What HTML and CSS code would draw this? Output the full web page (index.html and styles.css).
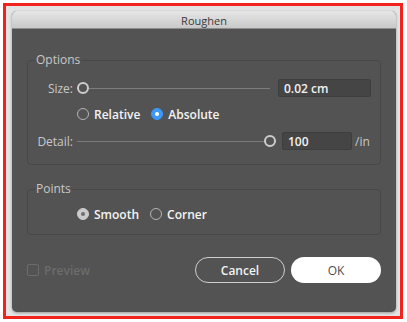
FILE: index.html
```html
<!DOCTYPE html>
<html lang="en">
<head>
    <meta charset="UTF-8">
    <meta name="viewport" content="width=device-width, initial-scale=1.0">
    <title>Roughen</title>
    <link rel="stylesheet" href="styles.css">
</head>
<body>
    <div class="frame">
        <div class="dialog">
            <div class="titlebar">Roughen</div>

            <div class="content">
                <fieldset class="group options">
                    <legend>Options</legend>

                    <div class="row">
                        <span class="label">Size:</span>
                        <div class="slider size-slider">
                            <span class="thumb thumb-start"></span>
                        </div>
                        <div class="field size-field">0.02 cm</div>
                    </div>

                    <div class="row radios indent">
                        <span class="radio"></span>
                        <span class="radio-label">Relative</span>
                        <span class="radio checked"></span>
                        <span class="radio-label">Absolute</span>
                    </div>

                    <div class="row">
                        <span class="label">Detail:</span>
                        <div class="slider detail-slider">
                            <span class="thumb thumb-end"></span>
                        </div>
                        <div class="field detail-field">100</div>
                        <span class="unit">/in</span>
                    </div>
                </fieldset>

                <fieldset class="group points">
                    <legend>Points</legend>
                    <div class="row radios indent">
                        <span class="radio selected-grey"></span>
                        <span class="radio-label">Smooth</span>
                        <span class="radio"></span>
                        <span class="radio-label">Corner</span>
                    </div>
                </fieldset>

                <div class="footer">
                    <div class="preview">
                        <span class="checkbox"></span>
                        <span>Preview</span>
                    </div>
                    <div class="buttons">
                        <button class="btn btn-cancel">Cancel</button>
                        <button class="btn btn-ok">OK</button>
                    </div>
                </div>
            </div>
        </div>
    </div>
</body>
</html>
```

FILE: styles.css
```css
body {
    margin: 0;
    padding: 3px;
    background-color: #ffffff;
    font-family: "Open Sans", "Noto Sans", sans-serif;
}
.frame {
    border: 3px solid #f2231d;
    background-color: #e4e4e4;
    padding: 5px 0 0 6px;
    width: 388px;
    height: 305px;
}
.dialog {
    width: 384px;
    height: 301px;
    background-color: #535353;
    border-radius: 5px;
    overflow: hidden;
    box-shadow: 0 1px 3px rgba(0, 0, 0, 0.35);
    display: flex;
    flex-direction: column;
}
.titlebar {
    height: 18px;
    line-height: 19px;
    text-align: center;
    font-size: 11px;
    color: #3a3a3a;
    background: linear-gradient(#e6e6e6, #c9c9c9);
    border-bottom: 1px solid #8d8d8d;
    box-sizing: border-box;
}
.content {
    padding: 24px 15px 0 15px;
    display: flex;
    flex-direction: column;
}
.group {
    margin: 0;
    border: 1px solid #484848;
    border-radius: 4px;
    padding: 0 9px;
    min-width: 0;
}
.group legend {
    margin-left: -2px;
    padding: 0 1px;
    font-size: 12px;
    line-height: 14px;
    color: #c8c8c8;
}
.options {
    padding-top: 12px;
    padding-bottom: 14px;
}
.points {
    margin-top: 17px;
    padding-top: 9px;
    padding-bottom: 11px;
}
.row {
    display: flex;
    align-items: center;
    height: 18px;
}
.options .row + .row {
    margin-top: 8px;
}
.options .row.radios + .row {
    margin-top: 9px;
}
.label {
    width: 36px;
    text-align: right;
    font-size: 12px;
    color: #c8c8c8;
    margin-right: 4px;
}
.indent {
    padding-left: 40px;
}
.slider {
    position: relative;
    height: 12px;
    display: flex;
    align-items: center;
}
.slider::before {
    content: "";
    flex: 1;
    height: 1px;
    background-color: #7c7c7c;
}
.size-slider {
    width: 193px;
    margin-right: 8px;
}
.detail-slider {
    width: 199px;
    margin-right: 6px;
}
.thumb {
    position: absolute;
    top: 0;
    width: 12px;
    height: 12px;
    box-sizing: border-box;
    border: 2px solid #cdcdcd;
    border-radius: 50%;
    background-color: #535353;
}
.thumb-start {
    left: 0;
}
.thumb-end {
    right: 0;
}
.field {
    height: 18px;
    line-height: 18px;
    box-sizing: border-box;
    background-color: #454545;
    border: 1px solid #3e3e3e;
    border-radius: 2px;
    padding-left: 5px;
    font-size: 12px;
    font-weight: 600;
    color: #f2f2f2;
}
.size-field {
    width: 93px;
}
.detail-field {
    width: 70px;
    margin-right: 3px;
}
.unit {
    font-size: 12px;
    color: #c8c8c8;
}
.radio {
    width: 12px;
    height: 12px;
    box-sizing: border-box;
    border: 1.5px solid #b4b4b4;
    border-radius: 50%;
    margin-right: 5px;
    display: flex;
    align-items: center;
    justify-content: center;
}
.radio.checked {
    background-color: #3b99fc;
    border-color: #3b99fc;
}
.radio.checked::after {
    content: "";
    width: 4px;
    height: 4px;
    border-radius: 50%;
    background-color: #ffffff;
}
.radio.selected-grey {
    background-color: #cbcbcb;
    border-color: #cbcbcb;
}
.radio.selected-grey::after {
    content: "";
    width: 4px;
    height: 4px;
    border-radius: 50%;
    background-color: #6e6e6e;
}
.radio-label {
    font-size: 12px;
    font-weight: 600;
    color: #f4f4f4;
    margin-right: 11px;
}
.footer {
    margin-top: 22px;
    display: flex;
    align-items: center;
    justify-content: space-between;
}
.preview {
    display: flex;
    align-items: center;
    gap: 5px;
    font-size: 12px;
    font-weight: 600;
    color: #6c6c6c;
}
.checkbox {
    width: 12px;
    height: 12px;
    box-sizing: border-box;
    border: 1px solid #6c6c6c;
    border-radius: 2px;
}
.buttons {
    display: flex;
    gap: 6px;
}
.btn {
    width: 90px;
    height: 26px;
    border-radius: 13px;
    font-family: inherit;
    font-size: 12px;
    padding: 0;
    box-sizing: border-box;
}
.btn-cancel {
    background-color: transparent;
    border: 1.5px solid #cfcfcf;
    color: #f2f2f2;
    font-weight: 600;
}
.btn-ok {
    background-color: #ffffff;
    border: none;
    color: #4e4e4e;
}
```
